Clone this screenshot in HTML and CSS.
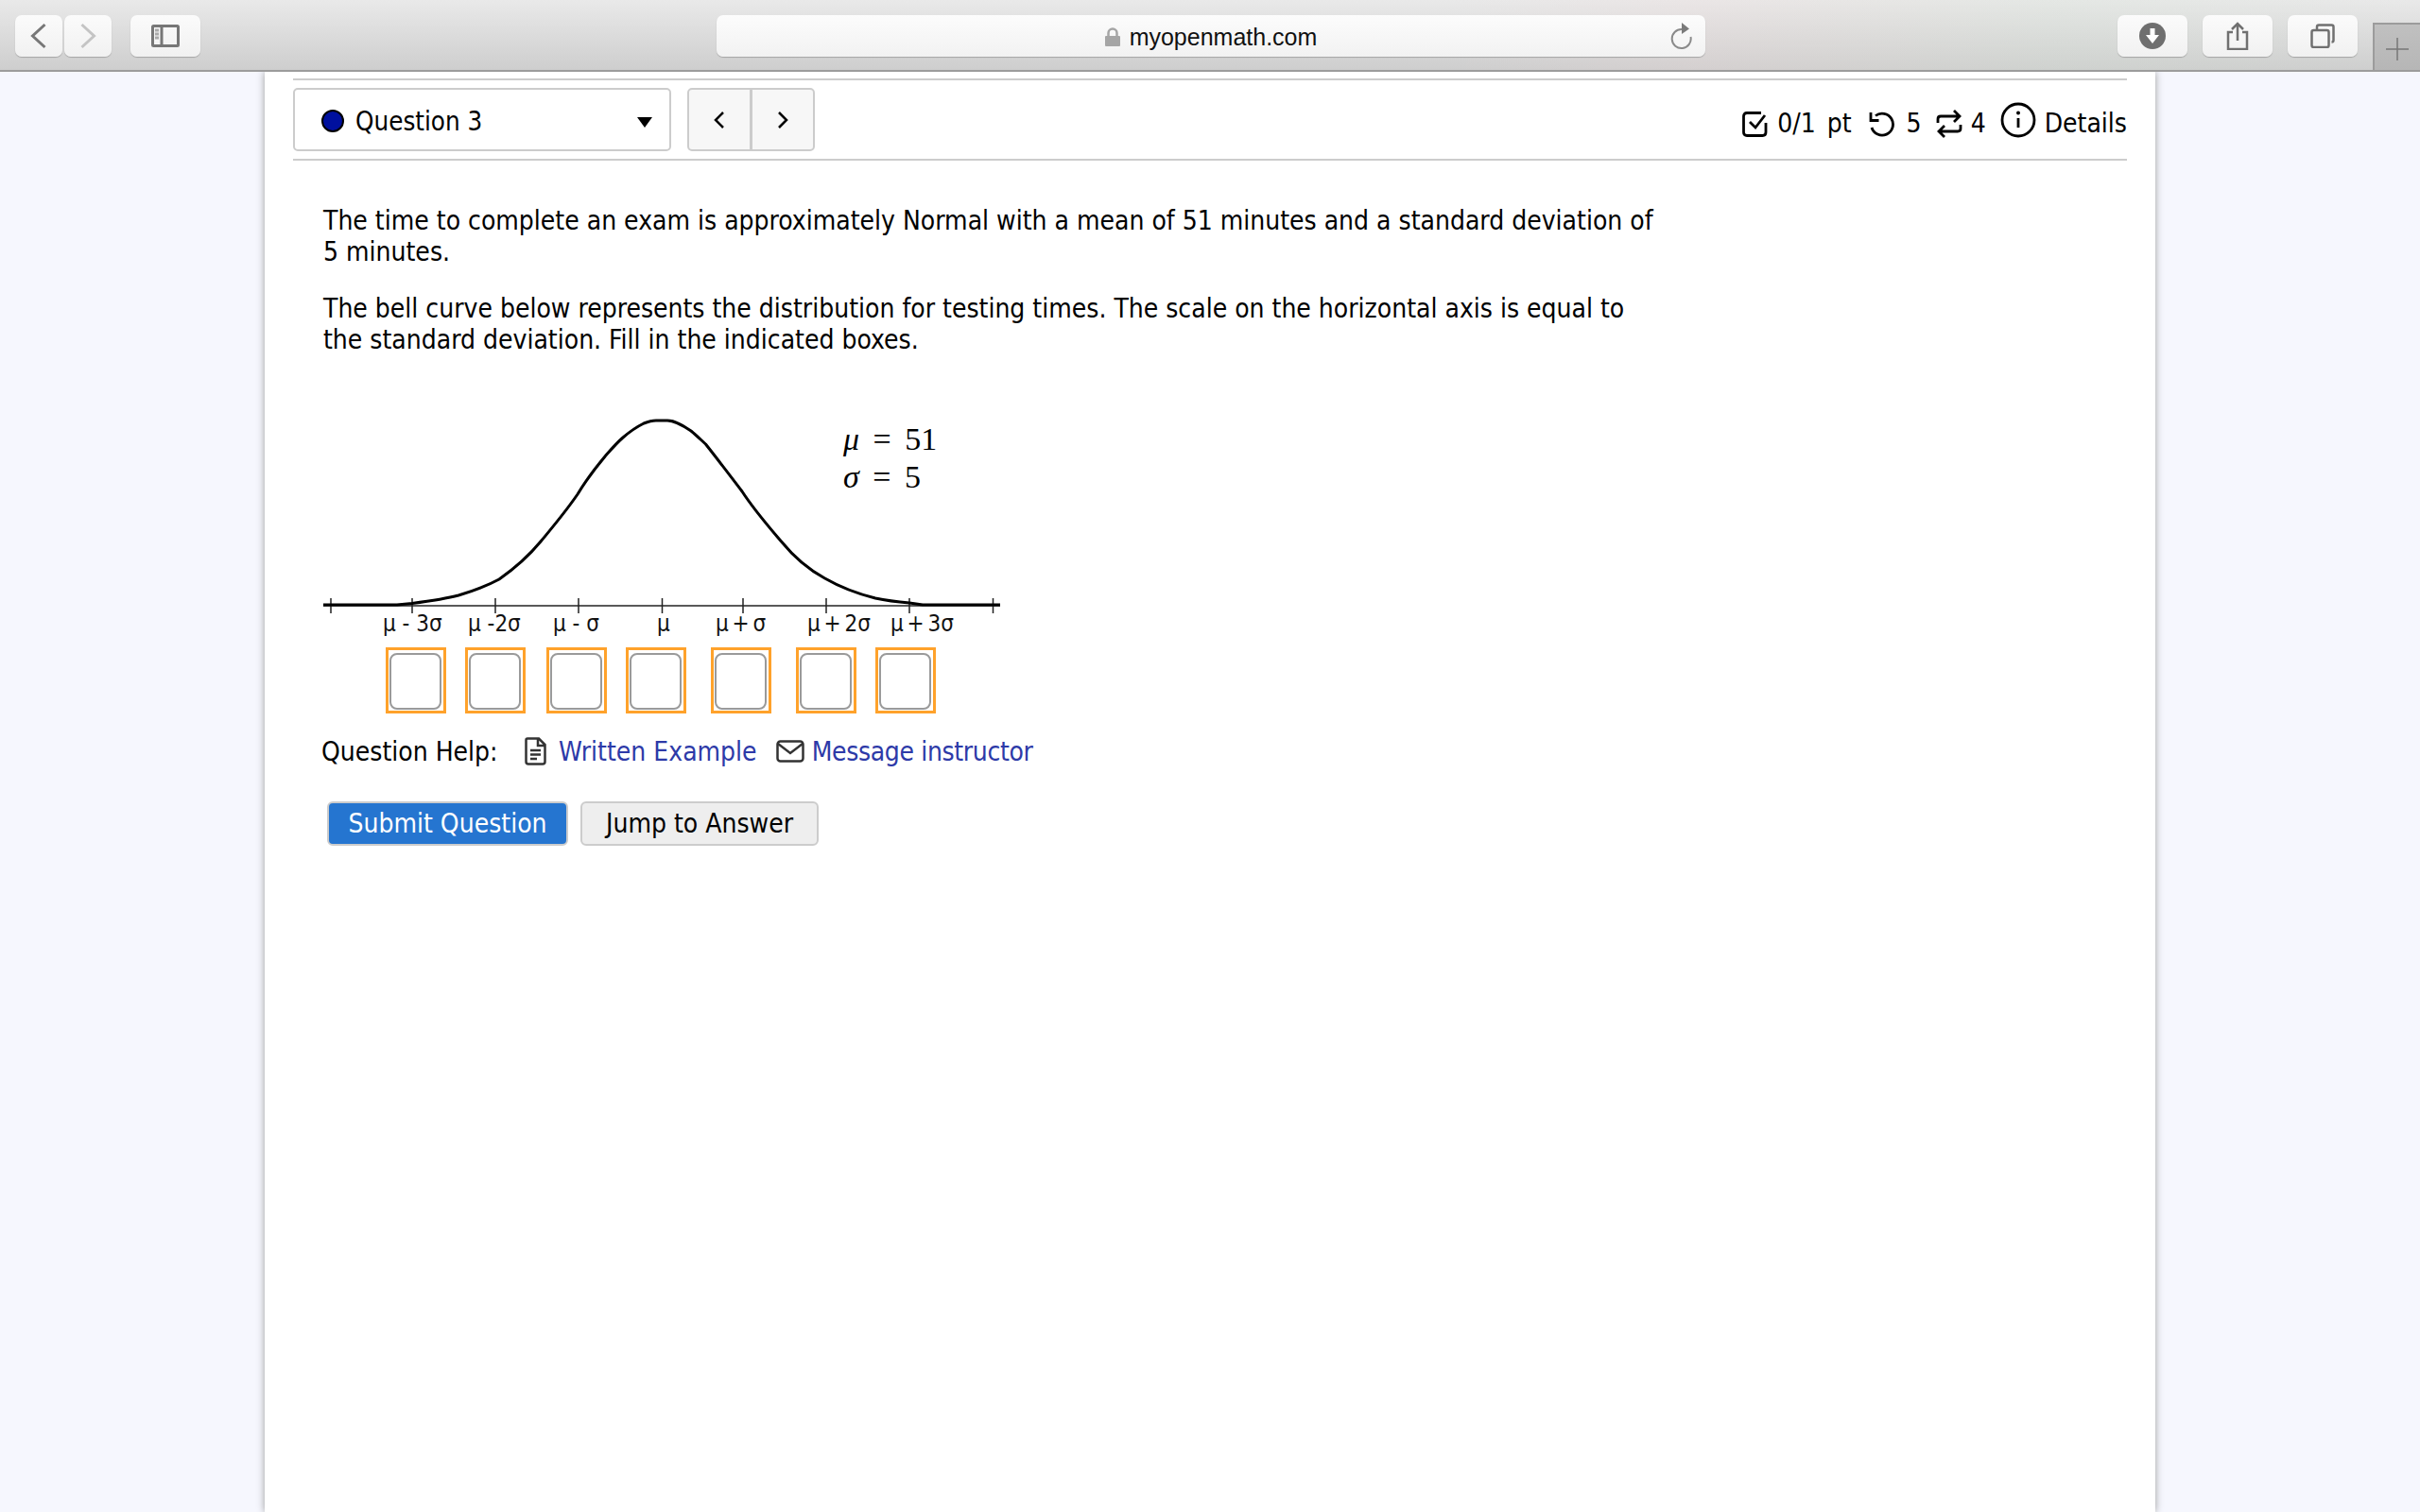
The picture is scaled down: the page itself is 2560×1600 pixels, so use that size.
FILE: index.html
```html
<!DOCTYPE html>
<html lang="en">
<head>
<meta charset="utf-8">
<title>myopenmath.com</title>
<link rel="stylesheet" href="styles.css">
</head>
<body>
<header class="toolbar">
  <div class="group">
    <div class="nav-pair">
      <div class="tbtn small"><svg width="20" height="28" viewBox="0 0 20 28"><path d="M16.500 2 L3.500 14 L16.500 26" class="ic"/></svg></div>
      <div class="tbtn small"><svg width="20" height="28" viewBox="0 0 20 28"><path d="M3.500 2 L16.500 14 L3.500 26" class="ic faint"/></svg></div>
    </div>
    <div class="tbtn sidebar"><svg width="30" height="24" viewBox="0 0 30 24"><rect x="1.500" y="1.500" width="27" height="21" rx="1" class="ic"/><path d="M11 1.500 V22.500" class="ic"/><path d="M4 6 H8 M4 10 H8 M4 14 H8" class="ic light"/></svg></div>
  </div>
  <div class="urlbar">
    <span class="url-center"><svg width="16" height="20" viewBox="0 0 16 20"><path d="M3.500 10 V6 a4.500 4.500 0 0 1 9 0 V10" fill="none" stroke="#a5a5a5" stroke-width="2.500"/><rect x="0" y="9" width="16" height="11" rx="1" fill="#a5a5a5"/></svg><span class="url-text">myopenmath.com</span></span>
    <svg class="reload" width="26" height="30" viewBox="0 0 26 30"><path d="M13 8 A10 10 0 1 0 22.500 16" fill="none" stroke="#8a8a8a" stroke-width="2"/><path d="M13 1 L21 7.500 L13 13 Z" fill="#7a7a7a"/></svg>
  </div>
  <div class="group right">
    <div class="tbtn wide"><svg width="28" height="28" viewBox="0 0 28 28"><circle cx="14" cy="14" r="14" fill="#6f6f6f"/><path d="M11.500 6 H16.500 V13 H21 L14 22 L7 13 H11.500 Z" fill="#fff"/></svg></div>
    <div class="tbtn wide"><svg width="24" height="30" viewBox="0 0 24 30"><path d="M12 20 V2 M6 8 L12 2 L18 8 M7 11 H2 V29 H22 V11 H17" class="ic thin"/></svg></div>
    <div class="tbtn wide"><svg width="26" height="26" viewBox="0 0 26 26"><rect x="1.500" y="7" width="18" height="18" rx="2" class="ic thin"/><path d="M7 7 V3.500 Q7 1.500 9 1.500 H22.500 Q24.500 1.500 24.500 3.500 V17.500 Q24.500 19.500 22.500 19.500" class="ic thin"/></svg></div>
  </div>
  <div class="newtab"><svg width="24" height="24" viewBox="0 0 24 24"><path d="M12 0 V24 M0 12 H24" stroke="#777" stroke-width="1.500"/></svg></div>
</header>
<div class="page">
  <main class="sheet">
    <div class="qbar">
      <div class="qselect"><span class="dot"></span><span class="qname">Question 3</span><span class="caret"></span></div>
      <div class="qnav">
        <div class="qnav-btn"><svg width="12" height="20" viewBox="0 0 12 20"><path d="M10 2 L2 10 L10 18" class="nav-ic"/></svg></div>
        <div class="qnav-btn"><svg width="12" height="20" viewBox="0 0 12 20"><path d="M2 2 L10 10 L2 18" class="nav-ic"/></svg></div>
      </div>
      <div class="qinfo">
        <svg width="28" height="28" viewBox="0 0 28 28"><path d="M25 13 V23 Q25 26.500 21.500 26.500 H5 Q1.500 26.500 1.500 23 V6 Q1.500 2.500 5 2.500 H20" class="info-ic"/><path d="M8 12 L14 18 L24 5" class="info-ic"/></svg>
        <span class="qi-t pts">0/1 pt</span>
        <svg class="qi-g g-undo" width="28" height="28" viewBox="0 0 28 28"><path d="M7 5.500 A11.500 11.500 0 1 1 3 18" class="info-ic"/><path d="M2 2 V10.500 H10.500" class="info-ic"/></svg>
        <span class="qi-t tries">5</span>
        <svg class="qi-g g-retry" width="28" height="32" viewBox="0 0 28 32"><path d="M2 15 V11 Q2 8 5 8 H25 M19 2 L25 8 L19 14 M26 17 V21 Q26 24 23 24 H3 M9 18 L3 24 L9 30" class="info-ic"/></svg>
        <span class="qi-t tries-b">4</span>
        <svg class="qi-g g-info" width="38" height="38" viewBox="0 0 38 38"><circle cx="19" cy="19" r="17" class="info-ic"/><circle cx="19" cy="11.500" r="2" fill="#000"/><path d="M19 17 V27" class="info-ic"/></svg>
        <span class="qi-t det">Details</span>
      </div>
    </div>
    <section class="question">
      <p class="para">The time to complete an exam is approximately Normal with a mean of 51 minutes and a standard deviation of 5 minutes.</p>
      <p class="para">The bell curve below represents the distribution for testing times. The scale on the horizontal axis is equal to the standard deviation. Fill in the indicated boxes.</p>
      <div class="figure">
        <svg class="bell" width="740" height="240" viewBox="342 430 740 240">
          <path class="axis" d="M342 641 H1058"/>
          <path class="axis" d="M350 633 V649 M436 633 V649 M524 633 V649 M612 633 V649 M700.500 633 V649 M786 633 V649 M874 633 V649 M962 633 V649 M1050.500 633 V649"/>
          <path class="curve" d="M342 640 L420 640 L436 638.500 C455 636 470 634 485 630 C502 625 515 620 528 613 C545 601 558 590 572 573 C586 556 598 542 611 523 C620 508 630 495 640 483 C647 475 652 469 659 463 C667 456 673 452 681 448 C686 446 690 445 694 445 L706 445 C714 445 722 450 731 456 C737 461 741 465 746.500 470 C760 487 772 503 785 520 C798 540 812 556 826.500 573 C842 592 856 603 872.600 612 C890 622 906 628 926 633 C940 636 950 637 962 638 L976 640 L1058 640"/>
        </svg>
        <span class="lab" style="left:63px">μ - 3σ</span>
        <span class="lab" style="left:153px">μ -2σ</span>
        <span class="lab" style="left:243px">μ - σ</span>
        <span class="lab" style="left:353px">μ</span>
        <span class="lab plus" style="left:415px">μ + σ</span>
        <span class="lab plus" style="left:512px">μ + 2σ</span>
        <span class="lab plus" style="left:600px">μ + 3σ</span>
        <div class="math m1"><i>μ</i> = 51</div>
        <div class="math m2"><i>σ</i> = 5</div>
        <div class="ans" style="left:66px"><input class="ansi" type="text"></div>
        <div class="ans" style="left:150px"><input class="ansi" type="text"></div>
        <div class="ans" style="left:236px"><input class="ansi" type="text"></div>
        <div class="ans" style="left:320px"><input class="ansi" type="text"></div>
        <div class="ans" style="left:410px"><input class="ansi" type="text"></div>
        <div class="ans" style="left:500px"><input class="ansi" type="text"></div>
        <div class="ans" style="left:584px"><input class="ansi" type="text"></div>
      </div>
      <div class="help">
        <span class="help-label">Question Help:</span>
        <svg class="help-ic1" width="23" height="30" viewBox="0 0 23 30"><path d="M3 1.500 H15 L21.500 8 V26 Q21.500 28.500 19 28.500 H4 Q1.500 28.500 1.500 26 V3 Q1.500 1.500 3 1.500 Z M14 2 V9 H21 M6 14 H17 M6 18.500 H17 M6 23 H13" class="help-s"/></svg>
        <a class="link" href="#">Written Example</a>
        <svg class="help-ic2" width="30" height="24" viewBox="0 0 30 24"><rect x="1.500" y="1.500" width="27" height="21" rx="3" class="help-s"/><path d="M2 4 L15 14 L28 4" class="help-s"/></svg>
        <a class="link msg" href="#">Message instructor</a>
      </div>
      <div class="actions">
        <button class="btn primary" type="button">Submit Question</button>
        <button class="btn jump" type="button">Jump to Answer</button>
      </div>
    </section>
  </main>
</div>
</body>
</html>
```
FILE: styles.css
```css
* { box-sizing: border-box; }
html, body { margin: 0; height: 100%; }
body { width: 2560px; height: 1600px; overflow: hidden; background: #f6f7fe; font-family: "DejaVu Sans Condensed", "Noto Sans", sans-serif; color: #000; display: flex; flex-direction: column; }
.toolbar { height: 76px; flex: none; background: linear-gradient(90deg, rgba(255,255,255,0) 60%, rgba(240,215,215,.18) 70%, rgba(210,225,210,.2) 85%, rgba(255,255,255,0) 100%), linear-gradient(#e9e9e9, #cecece); border-bottom: 2px solid #9c9c9c; display: flex; padding: 16px 0 0 16px; position: relative; }
.group { display: flex; gap: 20px; height: 44px; }
.group.right { gap: 16px; margin-left: 436px; }
.nav-pair { display: flex; gap: 2px; }
.tbtn { background: linear-gradient(#fbfbfb, #f1f1f1); border-radius: 7px; box-shadow: 0 1px 1px #a5a5a5; display: flex; align-items: center; justify-content: center; height: 44px; }
.small { width: 50px; }
.sidebar { width: 74px; }
.wide { width: 74px; }
.ic { fill: none; stroke: #777; stroke-width: 3; }
.thin { stroke-width: 2.500; stroke: #707070; }
.faint { stroke: #c4c4c4; }
.light { stroke: #aaa; }
.urlbar { width: 1046px; height: 44px; margin-left: 546px; background: linear-gradient(#fcfcfc, #f2f2f2); border-radius: 7px; box-shadow: 0 1px 1px #a5a5a5; display: flex; align-items: center; justify-content: center; position: relative; }
.url-center { display: flex; align-items: center; gap: 10px; padding-top: 2px; }
.url-text { font-family: "Liberation Sans", sans-serif; font-size: 25px; color: #111; }
.reload { position: absolute; right: 12px; top: 7px; }
.newtab { position: absolute; left: 2510px; top: 24px; width: 50px; height: 50px; padding-top: 4px; background: linear-gradient(#c0c0c0, #b6b6b6); border: 2px solid #9c9c9c; border-bottom: 0; border-right: 0; display: flex; align-items: center; justify-content: center; }
.page { flex: 1; display: flex; padding-left: 280px; }
.sheet { width: 2000px; background: #fff; box-shadow: 0 0 8px #999; padding: 7px 30px 0; }
.qbar { border-top: 2px solid #ccc; border-bottom: 2px solid #ccc; height: 87px; display: flex; align-items: center; }
.qselect { width: 400px; height: 67px; border: 2px solid #ccc; border-radius: 5px; display: flex; align-items: center; padding: 3px 18px 0 28px; font-size: 27.500px; }
.dot { width: 24px; height: 24px; border-radius: 50%; background: #00109e; border: 2px solid #000; margin-right: 12px; }
.qname { flex: 1; }
.caret { width: 0; height: 0; margin-top: 2px; border-left: 8px solid transparent; border-right: 8px solid transparent; border-top: 11px solid #000; }
.qnav { display: flex; margin-left: 17px; width: 135px; height: 67px; border: 2px solid #ccc; border-radius: 5px; background: #f7f7f7; }
.qnav-btn { flex: 1; display: flex; align-items: center; justify-content: center; }
.qnav-btn + .qnav-btn { border-left: 3px solid #ccc; }
.nav-ic { fill: none; stroke: #000; stroke-width: 2.500; }
.qinfo { margin-left: auto; display: flex; align-items: center; font-size: 28px; padding-top: 8px; }
.pts { margin-left: 9px; word-spacing: 4px; }
.g-undo { margin-left: 18px; }
.tries { margin-left: 12px; }
.tries-b { margin-left: 9px; }
.g-retry { margin-left: 15px; }
.g-info { margin-left: 15px; margin-top: -8px; }
.det { margin-left: 9px; }
.info-ic { fill: none; stroke: #000; stroke-width: 2.800; }
.question { padding: 48px 0 0 32px; }
.para { margin: 0 0 28px; width: 1410px; font-size: 28px; line-height: 32.500px; }
.figure { position: relative; width: 740px; height: 345px; margin-top: 54px; }
.bell { display: block; }
.axis { fill: none; stroke: #222; stroke-width: 1.500; }
.curve { fill: none; stroke: #000; stroke-width: 3; stroke-linejoin: round; }
.lab { position: absolute; top: 216px; font-size: 24px; line-height: 28px; white-space: nowrap; color: #111; }
.plus { word-spacing: -3px; }
.math { position: absolute; left: 550px; font-family: "Liberation Serif", serif; font-size: 34px; line-height: 36px; white-space: nowrap; word-spacing: 6px; }
.m1 { top: 17px; }
.m2 { top: 57px; }
.ans { position: absolute; top: 255px; width: 64px; height: 70px; border: 3px solid #ffa22b; padding: 3px 2px 1px 1px; }
.ansi { display: block; width: 100%; height: 100%; border: 2px solid #9a9a9a; border-radius: 8px; background: #fff; padding: 0; }
.help { display: flex; align-items: center; font-size: 28px; height: 40px; margin-left: -2px; }
.help-label { margin-right: 28px; }
.help-ic1 { margin-right: 13.500px; }
.help-ic2 { margin: 0 8px 0 20px; }
.help-s { fill: none; stroke: #333; stroke-width: 2.500; }
.link { color: #2d3aa8; text-decoration: none; }
.msg { letter-spacing: -0.350px; }
.actions { display: flex; gap: 13px; margin-top: 33px; margin-left: 4px; }
.btn { width: 252px; height: 47px; padding: 0; border: 2px solid #ccc; border-radius: 6px; background: #eee; font: inherit; font-size: 28px; color: #000; }
.primary { width: 255px; background: #2575d0; color: #fff; }
```
